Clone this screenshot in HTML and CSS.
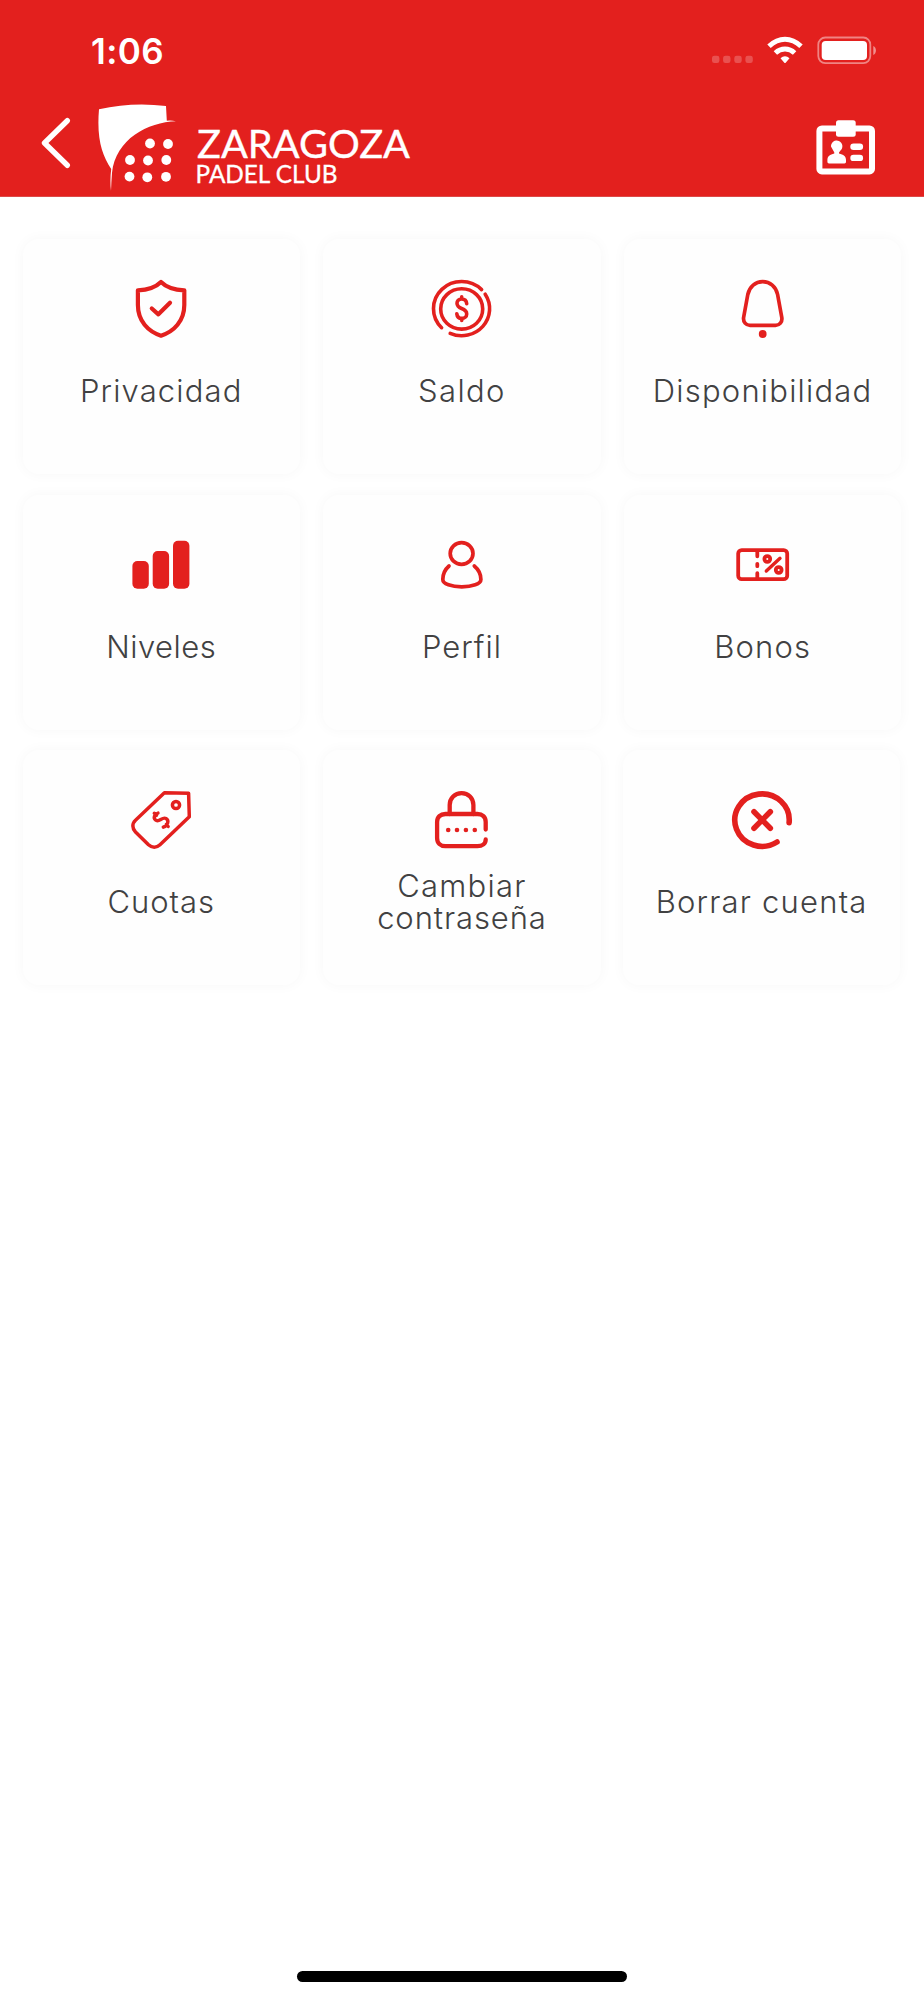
FILE: index.html
```html
<!DOCTYPE html>
<html lang="es">
<head>
<meta charset="utf-8">
<title>Zaragoza Padel Club</title>
<link rel="stylesheet" href="styles.css">
</head>
<body>
<div class="screen">
  <header class="header">
    <div class="status">
      <span class="time">1:06</span>
      <svg class="indicators" width="166" height="28" viewBox="711 36 166 28">
        <g fill="#fff" opacity=".22"><rect x="712" y="55.7" width="7.4" height="7.4" rx="2.4"/><rect x="723.1" y="55.7" width="7.4" height="7.4" rx="2.4"/><rect x="734.3" y="55.7" width="7.4" height="7.4" rx="2.4"/><rect x="745.4" y="55.7" width="7.4" height="7.4" rx="2.4"/></g>
        <g fill="none" stroke="#fff" stroke-width="5"><path d="M769 46.3C779 36.9 791 36.9 801 46.3"/><path d="M775.4 53C781 47.8 789 47.8 794.6 53"/></g>
        <path d="M780.5 58.3C783.2 55.5 786.8 55.5 789.5 58.3L785.7 62.7Q785 63.4 784.3 62.7Z" fill="#fff"/>
        <rect x="818.3" y="37.5" width="52" height="25.6" rx="7" fill="none" stroke="#fff" stroke-opacity=".45" stroke-width="1.800"/>
        <rect x="821.7" y="41" width="45.3" height="19" rx="4" fill="#fff"/>
        <path d="M873.3 46C876.8 47.6 876.8 53.4 873.3 55Z" fill="#fff" fill-opacity=".5"/>
      </svg>
    </div>
    <div class="nav">
      <svg class="back" width="32" height="54" viewBox="40 116 32 54"><path d="M67.300 120.700L44.500 143L67.300 165.300" fill="none" stroke="#fff" stroke-width="5.4" stroke-linecap="round" stroke-linejoin="round"/></svg>
      <svg class="logo" width="316" height="92" viewBox="96 102 316 92" fill="#fff">
        <path d="M99 109.3Q132 101.8 166 106L166.800 120.700Q171 120.200 176 121.200C148 122 115.500 139 112 173Q111.300 182 111 191Q109.800 180 111.200 169C102 155 96.500 139 99 109.300Z"/>
        <circle cx="150" cy="143.500" r="4.900"/><circle cx="168" cy="144" r="4.900"/>
        <circle cx="130" cy="160" r="4.900"/><circle cx="148" cy="160.500" r="4.900"/><circle cx="166.300" cy="160" r="4.900"/>
        <circle cx="129.500" cy="176.600" r="4.900"/><circle cx="147.300" cy="177.300" r="4.900"/><circle cx="166" cy="176.800" r="4.900"/>
        <text class="logo-text" x="197" y="158.300" font-size="38.500" textLength="213" lengthAdjust="spacingAndGlyphs">ZARAGOZA</text>
        <text class="logo-text" x="195.500" y="182.700" font-size="25.800" textLength="142" lengthAdjust="spacingAndGlyphs">PADEL CLUB</text>
      </svg>
      <svg class="badge" width="60" height="56" viewBox="816 119 60 56" fill="#fff">
        <rect x="819.400" y="128.400" width="52.600" height="43" rx="2.500" fill="none" stroke="#fff" stroke-width="6"/>
        <rect x="836" y="120.200" width="19.700" height="16.500" rx="2.500"/>
        <path d="M831 146.500a5.700 5.700 0 1 1 9.500 4L839 152.500V153.600C843.500 154.500 846 156.500 846 160V162Q846 163.400 844.500 163.400H829Q827.400 163.400 827.400 162V160C827.400 156.500 830 154.500 834.300 153.600V152.500Z"/>
        <rect x="850.300" y="143.600" width="12.800" height="6.400" rx="3.200"/><rect x="850.300" y="154.700" width="12.800" height="6.400" rx="3.200"/>
      </svg>
    </div>
  </header>

  <main class="grid">
    <a class="card">
      <svg class="icon" viewBox="0 0 80 80" stroke-width="4.200"><path d="M40 13C46 19 54 21 63.300 21.300V36C63.300 52 53 62.500 40 66.700C27 62.500 16.900 52 16.900 36V21.300C26 21 34 19 40 13Z"/><path d="M30.800 39.500L37.400 45.300L49 33.700"/></svg>
      <span class="label privacidad">Privacidad</span>
    </a>
    <a class="card">
      <svg class="icon" viewBox="0.6 0.3 80 80" stroke-width="3.600"><path d="M20.200 59A28 27 0 0 1 60.200 20.900"/><path d="M63.800 25.500A28 27 0 0 1 28.800 64.700"/><ellipse cx="40.300" cy="40.200" rx="21" ry="20.200"/><path d="M45.300 35C45 31.500 43 30.300 40.200 30.300C37.200 30.300 35.600 32.300 35.600 34.600C35.600 37.500 37.500 38.800 40.200 39.800C43 40.800 45.300 42.200 45.300 45.200C45.300 48 43 49.700 40.400 49.700C37.500 49.700 35.700 48 35.400 45M40.300 28.200V30M40.300 50V51.800"/></svg>
      <span class="label saldo">Saldo</span>
    </a>
    <a class="card">
      <svg class="icon" viewBox="0 0 80 80" stroke-width="3.700"><path d="M24.800 25.500C26.500 17.500 32.500 12.700 39.700 12.700S53 17.500 54.600 25.500L58.800 48.500C59.500 53 56.500 56.300 52.500 56.300H27C23 56.300 20 53 20.600 48.500Z"/><circle class="solid" cx="39.700" cy="65" r="3.900"/></svg>
      <span class="label disponibilidad">Disponibilidad</span>
    </a>
    <a class="card">
      <svg class="icon" viewBox="0 0 80 80"><g class="solid"><rect x="11.400" y="36" width="16.400" height="27.800" rx="5"/><rect x="31.700" y="26" width="16.400" height="37.800" rx="5"/><rect x="52" y="15.700" width="16.400" height="48.100" rx="5"/></g></svg>
      <span class="label niveles">Niveles</span>
    </a>
    <a class="card">
      <svg class="icon" viewBox="0.5 0 80 80" stroke-width="3.700"><ellipse cx="40.100" cy="28.500" rx="11.400" ry="10.800"/><path d="M27.500 41C23.500 44.500 21.300 50 21.300 54.500C21.300 59 30 61.800 40.300 61.800S59.400 59 59.400 54.500C59.400 50 57 44.500 52.800 41"/></svg>
      <span class="label perfil">Perfil</span>
    </a>
    <a class="card">
      <svg class="icon" viewBox="0 0 80 80" stroke-width="3.800"><rect x="15.200" y="25.100" width="49" height="29.100" rx="3.500"/><path d="M34.300 27V31.300M34.300 38.800V41.200M34.300 48.200V53" /><circle cx="44.300" cy="34" r="2.900"/><circle cx="55.700" cy="45" r="2.900"/><path stroke-width="3.400" d="M43.300 46L57 33.300"/></svg>
      <span class="label bonos">Bonos</span>
    </a>
    <a class="card">
      <svg class="icon" viewBox="0 0 80 80" stroke-width="3.500"><path d="M43.400 12.700L67.600 13.300L68.300 36.800L39 64.800C35.500 68 31 68 27.500 64.800L14.500 52C11 48.500 11 43.500 14.500 40.300Z"/><circle cx="55" cy="25" r="3.600"/><path stroke-width="3.400" d="M37 33.100C33.500 34 32 38 34.500 40C38 43 41 36.500 45 38.500C48.500 40.500 46.800 45.500 42.300 47.200M33.300 33.200L35.500 35.400M45.300 44.300L47.200 46.500"/></svg>
      <span class="label cuotas">Cuotas</span>
    </a>
    <a class="card">
      <svg class="icon" viewBox="0.6 0 80 80" stroke-width="4.300"><path d="M64.300 49.500V42C64.300 37 61 34 56 34H24C19 34 15.700 37 15.700 42V58C15.700 63 19 66.200 24 66.200H56C61 66.200 64.300 63.500 64.300 59.500"/><path d="M28.300 34V25C28.300 18 33.500 13.200 40.200 13.200S52 18 52 25V34"/><g class="solid"><circle cx="26.800" cy="50" r="2.300"/><circle cx="35.600" cy="50" r="2.300"/><circle cx="44.500" cy="50" r="2.300"/><circle cx="53.400" cy="50" r="2.300"/></g></svg>
      <span class="label"><span class="cambiar">Cambiar</span><span class="contrasena">contraseña</span></span>
    </a>
    <a class="card card-last">
      <svg class="icon" viewBox="0 0 80 80" stroke-width="5.600"><path d="M67.100 42.700A27.200 26.200 0 1 0 55 62"/><path d="M32 31.800L48.300 48.200M48.300 31.800L32 48.200"/></svg>
      <span class="label borrar">Borrar cuenta</span>
    </a>
  </main>
  <div class="home-indicator"></div>
</div>
</body>
</html>
```
FILE: styles.css
```css
* { box-sizing: border-box; }
body { margin: 0; background: #fff; }
.screen {
  width: 924px;
  height: 2000px;
  display: flex;
  flex-direction: column;
  font-family: Inter, "Liberation Sans", sans-serif;
}
.header {
  height: 197px;
  background: #e3201e;
  border-bottom: 1px solid #dc4a48;
  color: #fff;
}
.status {
  height: 102px;
  padding: 30px 47px 0 91px;
  display: flex;
  justify-content: space-between;
  align-items: flex-start;
}
.time {
  font-size: 35px;
  font-weight: 600;
  line-height: 42px;
  letter-spacing: .4px;
}
.indicators { margin-top: 6px; }
.nav {
  display: flex;
  align-items: flex-start;
  padding: 0 48px 0 40px;
}
.back { margin-top: 14px; }
.logo { margin-left: 24px; }
.badge { margin: 17px 0 0 auto; }
.logo-text { font-family: Lato, sans-serif; stroke: #fff; stroke-width: .35px; }
.grid {
  display: grid;
  grid-template-columns: repeat(3, 277.500px);
  grid-auto-rows: 235px;
  gap: 20.500px 23.200px;
  padding: 42px 0 0 22.500px;
}
.card {
  display: flex;
  flex-direction: column;
  align-items: center;
  padding-top: 30px;
  background: #fefefe;
  border-radius: 16px;
  box-shadow: 0 0 14px rgba(0, 0, 0, .035);
}
.card-last { margin: 0 1px 0 -1px; }
.icon {
  width: 80px;
  height: 80px;
  flex: none;
  fill: none;
  stroke: #e3201e;
  stroke-linecap: round;
  stroke-linejoin: round;
}
.solid { fill: #e3201e; stroke: none; }
.label {
  height: 64px;
  margin-top: 10px;
  display: flex;
  flex-direction: column;
  align-items: center;
  justify-content: center;
  font-size: 31px;
  font-weight: 350;
  line-height: 32px;
  color: #414142;
  white-space: nowrap;
}
.privacidad { letter-spacing: 1.150px; }
.saldo { letter-spacing: 1.350px; }
.disponibilidad { letter-spacing: 1.200px; }
.niveles { letter-spacing: .500px; }
.perfil { letter-spacing: .950px; }
.bonos { letter-spacing: 1.150px; }
.cuotas { letter-spacing: 1px; }
.cambiar { letter-spacing: 1.250px; }
.contrasena { letter-spacing: .900px; }
.borrar { letter-spacing: 1.200px; }
.home-indicator {
  width: 330px;
  height: 11px;
  margin: auto auto 18px;
  border-radius: 6px;
  background: #000;
}
```
